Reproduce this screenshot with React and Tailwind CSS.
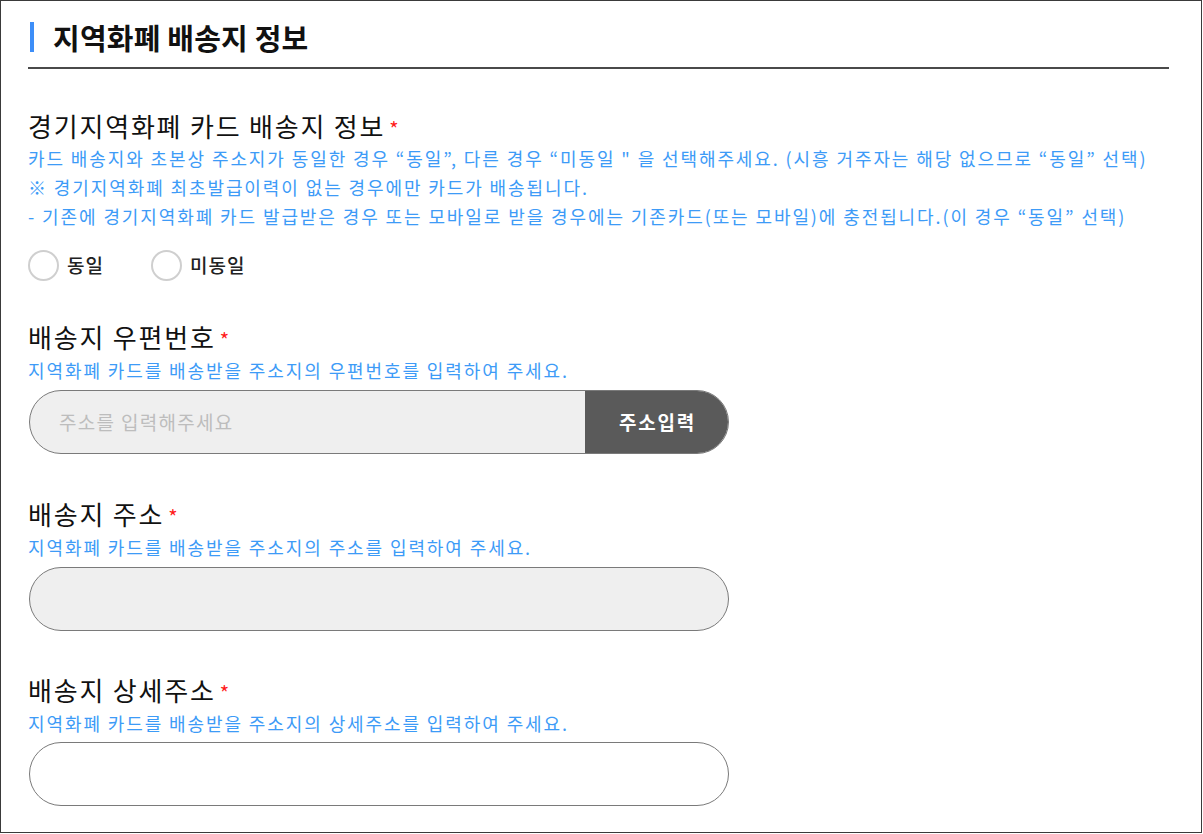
export default function App() {
  const font = { fontFamily: '"Noto Sans CJK KR", "Noto Sans", sans-serif' };
  const Label = ({ children, className = "" }) => (
    <div className={`flex items-center text-[26px] leading-[32px] tracking-[1.8px] text-[#111] ${className}`}>
      <span>{children}</span>
      <span className="ml-[4px] text-[20px] leading-none text-[#ff1a1a] translate-y-[3px]">*</span>
    </div>
  );
  const Help = ({ children, className = "" }) => (
    <div className={`text-[18px] leading-[29px] tracking-[1.9px] text-[#3d9bf7] whitespace-nowrap ${className}`}>{children}</div>
  );
  return (
    <div style={font} className="w-[1202px] h-[833px] border border-[#3a3a3a] bg-white box-border overflow-hidden">
      <div className="pl-[27px] pr-[32px] pt-[21px]">
        <div className="flex items-center h-[30px]">
          <div className="w-[4px] h-[30px] bg-[#3d8ef8] ml-[2px]" />
          <div className="ml-[19px] text-[29px] leading-[30px] font-bold text-[#111] tracking-[0.2px]">지역화폐 배송지 정보</div>
        </div>
        <div className="mt-[15px] h-[2px] bg-[#4a4a4a]" />

        <Label className="mt-[41px]">경기지역화폐 카드 배송지 정보</Label>
        <Help className="mt-[2px]">카드 배송지와 초본상 주소지가 동일한 경우 “동일”, 다른 경우 “미동일 " 을 선택해주세요. (시흥 거주자는 해당 없으므로 “동일” 선택)</Help>
        <Help>※ 경기지역화폐 최초발급이력이 없는 경우에만 카드가 배송됩니다.</Help>
        <Help>- 기존에 경기지역화폐 카드 발급받은 경우 또는 모바일로 받을 경우에는 기존카드(또는 모바일)에 충전됩니다.(이 경우 “동일” 선택)</Help>

        <div className="mt-[18px] flex items-center h-[32px]">
          <div className="flex items-center">
            <div className="w-[31px] h-[31px] rounded-full border-2 border-[#cfcfcf] bg-white" />
            <span className="ml-[8px] text-[19px] font-medium tracking-[1px] text-[#222]">동일</span>
          </div>
          <div className="flex items-center ml-[47px]">
            <div className="w-[31px] h-[31px] rounded-full border-2 border-[#cfcfcf] bg-white" />
            <span className="ml-[8px] text-[19px] font-medium tracking-[1px] text-[#222]">미동일</span>
          </div>
        </div>

        <Label className="mt-[40px]">배송지 우편번호</Label>
        <Help className="mt-[3px]">지역화폐 카드를 배송받을 주소지의 우편번호를 입력하여 주세요.</Help>
        <div className="mt-[5px] ml-[1px] w-[700px] h-[64px] rounded-full border border-[#7a7a7a] bg-[#efefef] flex overflow-hidden">
          <div className="flex-1 flex items-center pl-[29px] text-[19px] tracking-[1.3px] text-[#bdbdbd]">주소를 입력해주세요</div>
          <div className="w-[143px] bg-[#5a5a5a] flex items-center justify-center pl-[2px] text-[19px] font-bold tracking-[1.8px] text-white">주소입력</div>
        </div>

        <Label className="mt-[44px]">배송지 주소</Label>
        <Help className="mt-[3px]">지역화폐 카드를 배송받을 주소지의 주소를 입력하여 주세요.</Help>
        <div className="mt-[5px] ml-[1px] w-[700px] h-[64px] rounded-full border border-[#7a7a7a] bg-[#efefef]" />

        <Label className="mt-[43px]">배송지 상세주소</Label>
        <Help className="mt-[3px]">지역화폐 카드를 배송받을 주소지의 상세주소를 입력하여 주세요.</Help>
        <div className="mt-[4px] ml-[1px] w-[700px] h-[64px] rounded-full border border-[#7a7a7a] bg-white" />
      </div>
    </div>
  );
}
